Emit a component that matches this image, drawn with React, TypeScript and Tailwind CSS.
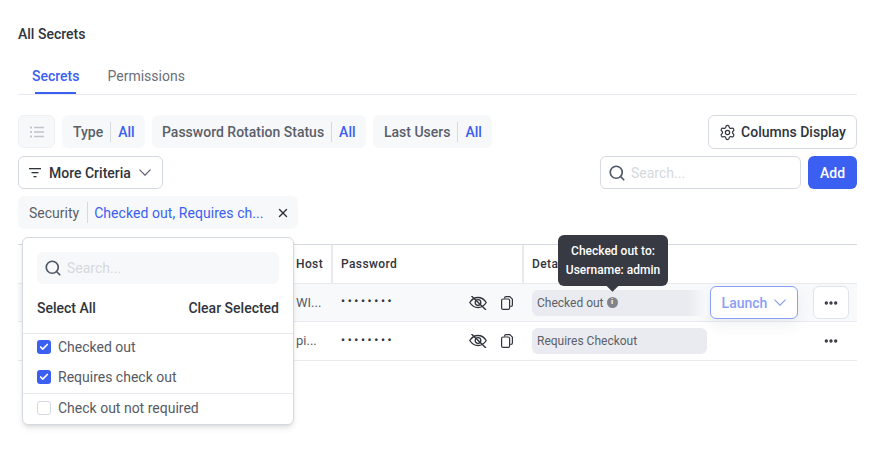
import { Check, Ellipsis, Search, Settings, X } from 'lucide-react';

const pill = 'flex h-[33px] items-center rounded-md bg-[#f7f8fa] text-sm font-medium text-[#5b5f69]';

function FilterPill({ label, className }: { label: string; className: string }) {
  return (
    <div className={`${pill} ${className}`}>
      <span>{label}</span>
      <span className="mx-[7px] h-[20px] w-px bg-[#d5d9e0]" />
      <span className="text-[#3b5ff0]">All</span>
    </div>
  );
}

function Chevron({ color }: { color: string }) {
  return (
    <svg width="12" height="7" viewBox="0 0 12 7" fill="none" stroke={color} strokeWidth="1.2">
      <path d="M.5.7 6 6.2 11.5.7" />
    </svg>
  );
}

function EyeSlash() {
  return (
    <svg width="18" height="14" viewBox="0 0 18 14" fill="none" stroke="#30343c" strokeWidth="1.3">
      <path d="M.8 6.5C2.8 3.2 5.6 1.5 9 1.5s6.2 1.7 8.2 5c-2 3.3-4.800 5-8.200 5S2.800 9.800.8 6.500Z" />
      <circle cx="9" cy="6.500" r="2.800" />
      <path d="M2.500 0 17 14" strokeWidth="1.400" />
    </svg>
  );
}

function CopyIcon() {
  return (
    <svg width="12" height="14" viewBox="0 0 12 14" fill="none" stroke="#30343c" strokeWidth="1.2">
      <path d="M3.600 2.500V2A1.400 1.400 0 0 1 5 .6h3.800l2.600 2.600V9a1.400 1.400 0 0 1-1.400 1.400h-.6" />
      <rect x=".6" y="3" width="8" height="10.400" rx="1.500" />
    </svg>
  );
}

function OptionRow({ label, checked }: { label: string; checked?: boolean }) {
  return (
    <div className="flex items-center gap-[7px] text-sm text-[#565a64]">
      {checked ? (
        <span className="flex h-[14px] w-[14px] items-center justify-center rounded-[3px] bg-[#3b5ff0]">
          <Check size={10} strokeWidth={4} color="white" />
        </span>
      ) : (
        <span className="h-[14px] w-[14px] rounded-[3px] border border-[#d5d9e0] bg-white" />
      )}
      <span>{label}</span>
    </div>
  );
}

function SecretRow({ host, details, active }: { host: string; details: string; active?: boolean }) {
  return (
    <div className={`grid grid-cols-[270px_45px_191px_1fr] items-center border-b border-[#e8eaef] ${active ? 'relative z-10 h-[38px] bg-[#f8f9fb]' : 'h-[39px] bg-white'}`}>
      <div />
      <div className="pl-2 text-[13px] text-[#565a64]">{host}</div>
      <div className="flex items-center pl-[8px] pr-[11px]">
        <span className="text-[11px] font-bold tracking-[2.7px] text-[#30343c]">••••••••</span>
        <span className="ml-auto mr-[14px] flex"><EyeSlash /></span>
        <CopyIcon />
      </div>
      <div className="flex items-center pl-[8px]">
        <div className="relative flex h-[26px] w-[175px] items-center rounded-md bg-[#e9ebf0] pl-[5px] text-xs text-[#5b5f69]">
          {details}
          {active && <span className="ml-[3px] flex h-[11px] w-[11px] items-center justify-center rounded-full bg-[#7f838c] text-[8px] font-bold text-white">i</span>}
          {active && <span className="absolute inset-y-0 right-0 w-[20px] bg-linear-to-r from-[#f8f9fb00] to-[#f8f9fb]" />}
        </div>
        {active ? (
          <button className="ml-[3px] flex h-[33px] w-[88px] items-center justify-center gap-[7px] rounded-md border border-[#8aa0f5] bg-white text-sm font-medium text-[#8a9ff5] shadow-[0_6px_14px_rgba(90,100,130,0.09)]">
            Launch <Chevron color="#8a9ff5" />
          </button>
        ) : null}
        <div className={`flex h-[33px] w-[36px] items-center justify-center rounded-md ${active ? 'ml-[15px] border border-[#e0e3e9] bg-white' : 'ml-[106px]'}`}>
          <Ellipsis size={16} strokeWidth={3} color="#30343c" />
        </div>
      </div>
    </div>
  );
}

export default function App() {
  return (
    <div className="relative h-[469px] w-[890px] overflow-hidden bg-white pl-[18px] pr-[33px] pt-[25px] font-['Roboto',sans-serif]">
      <h1 className="text-sm leading-[18px] font-medium text-[#30343c]">All Secrets</h1>

      {/* Tabs */}
      <div className="mt-[15px] flex h-[37px] gap-[28px] border-b border-[#e8eaef] pl-[14px] text-sm">
        <div className="relative pt-[8px] font-medium text-[#3b5ff0]">
          Secrets
          <span className="absolute bottom-0 left-[3px] h-[2px] w-[41px] bg-[#3b5ff0]" />
        </div>
        <div className="pt-[8px] text-[#6b6f78]">Permissions</div>
      </div>

      {/* Filters */}
      <div className="mt-[20px] flex items-start gap-[7px]">
        <div className="flex h-[33px] w-[37px] items-center justify-center rounded-md border border-[#eff1f4] bg-[#f7f8fa]">
          <svg width="14" height="12" viewBox="0 0 14 12" fill="#c0c4cc">
            <rect x="0" y="0.500" width="2" height="2" rx="0.500" />
            <rect x="0" y="5" width="2" height="2" rx="0.500" />
            <rect x="0" y="9.500" width="2" height="2" rx="0.500" />
            <rect x="4" y="0.750" width="10" height="1.500" />
            <rect x="4" y="5.250" width="10" height="1.500" />
            <rect x="4" y="9.750" width="10" height="1.500" />
          </svg>
        </div>
        <FilterPill label="Type" className="w-[83px] pl-[11px]" />
        <FilterPill label="Password Rotation Status" className="w-[214px] pl-[10px]" />
        <FilterPill label="Last Users" className="w-[119px] pl-[11px]" />
        <button className="ml-auto flex h-[34px] w-[149px] items-center justify-center gap-[5px] rounded-md border border-[#d5d9e0] text-sm font-medium text-[#30343c]">
          <Settings size={17} strokeWidth={1.7} /> Columns Display
        </button>
      </div>

      <div className="mt-[7px] flex items-center">
        <button className="flex h-[33px] w-[145px] items-center gap-2 rounded-md border border-[#d5d9e0] pl-[10px] text-sm font-medium text-[#30343c]">
          <svg width="12" height="10" viewBox="0 0 12 10" fill="#30343c">
            <rect x="0" y="0" width="12" height="1.300" />
            <rect x="2.500" y="4" width="7" height="1.300" />
            <rect x="4.500" y="8" width="3" height="1.300" />
          </svg>
          More Criteria
          <Chevron color="#5b5f69" />
        </button>
        <div className="ml-auto flex h-[33px] w-[201px] items-center gap-[5px] rounded-md border border-[#d5d9e0] pl-[7px] text-sm text-[#d5d9e0]">
          <Search size={18} color="#4d5766" strokeWidth={2.2} /> Search...
        </div>
        <button className="ml-[7px] h-[33px] w-[49px] rounded-md bg-[#3b5ff0] text-sm font-medium text-white">Add</button>
      </div>

      <div className={`${pill} mb-[15px] mt-[7px] h-[31px] w-[280px] pl-[11px] font-normal`}>
        <span>Security</span>
        <span className="ml-[8px] mr-[6px] h-[21px] w-px bg-[#d5d9e0]" />
        <span className="tracking-[0.06px] text-[#3b5ff0]">Checked out, Requires ch...</span>
        <X size={14} strokeWidth={2.4} color="#30343c" className="ml-[12px]" />
      </div>

      {/* Table */}
      <div className="border-t border-[#d5d9e0]">
        <div className="grid h-[39px] grid-cols-[270px_45px_191px_1fr] items-center border-b border-[#e8eaef] text-xs font-medium tracking-[0.4px] text-[#30343c]">
          <div />
          <div className="flex h-full items-center border-r-2 border-[#e8eaef] pl-2">Host</div>
          <div className="flex h-full items-center border-r-2 border-[#e8eaef] pl-[8px]">Password</div>
          <div className="pl-[8px]">Details</div>
        </div>
        <SecretRow host="WI..." details="Checked out" active />
        <SecretRow host="pi..." details="Requires Checkout" />
      </div>

      {/* Security filter dropdown */}
      <div className="absolute left-[22px] top-[237px] z-20 h-[188px] w-[272px] rounded-md border border-[#d5d9e0] bg-white pt-[14px] shadow-md">
        <div className="mx-[14px] flex h-[32px] items-center gap-[5px] rounded-md bg-[#f7f8fa] pl-[7px] text-sm text-[#d5d9e0]">
          <Search size={18} color="#4d5766" strokeWidth={2.2} /> Search...
        </div>
        <div className="mx-[14px] mt-[14px] flex justify-between text-sm font-medium text-[#30343c]">
          <span>Select All</span>
          <span>Clear Selected</span>
        </div>
        <div className="mt-[15px] flex flex-col gap-[10px] border-t border-[#e8eaef] px-[14px] pb-[6px] pt-[3px]">
          <OptionRow label="Checked out" checked />
          <OptionRow label="Requires check out" checked />
        </div>
        <div className="border-t border-[#e8eaef] px-[14px] pt-[4px]">
          <OptionRow label="Check out not required" />
        </div>
      </div>

      {/* Tooltip */}
      <div className="absolute left-[558px] top-[235px] z-20 flex h-[51px] w-[110px] flex-col items-center justify-center gap-[2px] rounded-md bg-[#373a43] text-xs font-medium leading-[17px] text-white">
        <span>Checked out to:</span>
        <span>Username: admin</span>
        <span className="absolute bottom-[-4px] left-[50px] h-[9px] w-[9px] rotate-45 bg-[#373a43]" />
      </div>
    </div>
  );
}
